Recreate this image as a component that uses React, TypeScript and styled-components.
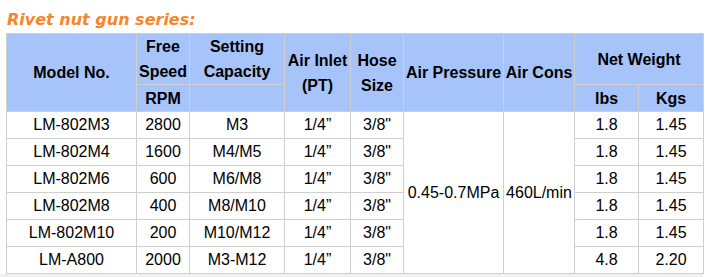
import styled, { createGlobalStyle } from 'styled-components';

const GlobalStyle = createGlobalStyle`
    body {
        margin: 0;
        background: #fff;
        font-family: "Liberation Sans", Arial, sans-serif;
    }
`;

const Page = styled.div`
    display: flex;
    flex-direction: column;
    padding: 8px 2px 0 6px;
`;

const Title = styled.h2`
    margin: 0 0 2px 1px;
    height: 23px;
    line-height: 23px;
    font-family: "DejaVu Sans", Verdana, sans-serif;
    font-size: 16px;
    font-weight: bold;
    font-style: italic;
    color: #f7852a;
`;

const Table = styled.table`
    border-collapse: collapse;
    table-layout: fixed;
    width: 698px;
    font-size: 16px;
    color: #000;
`;

const HeadCell = styled.th<{ $h?: number }>`
    background: #a7c4fa;
    border: 1px solid #cfcfcf;
    font-weight: bold;
    text-align: center;
    line-height: 25px;
    padding: 0;
    height: ${(p) => p.$h ?? 26}px;
`;

const Cell = styled.td`
    border: 1px solid #cfcfcf;
    text-align: center;
    height: 26px;
    padding: 0;
    line-height: 20px;
`;

const Footer = styled.div`
    height: 4px;
    margin-left: -6px;
    background: #f0f0f0;
`;

const cols = [130, 53, 95, 66, 53, 100, 71, 64, 65];

const rows = [
    ['LM-802M3', '2800', 'M3', '1.8', '1.45'],
    ['LM-802M4', '1600', 'M4/M5', '1.8', '1.45'],
    ['LM-802M6', '600', 'M6/M8', '1.8', '1.45'],
    ['LM-802M8', '400', 'M8/M10', '1.8', '1.45'],
    ['LM-802M10', '200', 'M10/M12', '1.8', '1.45'],
    ['LM-A800', '2000', 'M3-M12', '4.8', '2.20'],
];

function App() {
    return (
        <Page>
            <GlobalStyle />
            <Title>Rivet nut gun series:</Title>
            <Table>
                <colgroup>
                    {cols.map((w, i) => (
                        <col key={i} style={{ width: w }} />
                    ))}
                </colgroup>
                <thead>
                    <tr>
                        <HeadCell rowSpan={2}>Model No.</HeadCell>
                        <HeadCell $h={50}>Free<br />Speed</HeadCell>
                        <HeadCell $h={50}>Setting<br />Capacity</HeadCell>
                        <HeadCell rowSpan={2}>Air Inlet<br />(PT)</HeadCell>
                        <HeadCell rowSpan={2}>Hose<br />Size</HeadCell>
                        <HeadCell rowSpan={2}>Air Pressure</HeadCell>
                        <HeadCell rowSpan={2}>Air Cons</HeadCell>
                        <HeadCell colSpan={2} $h={50}>Net Weight</HeadCell>
                    </tr>
                    <tr>
                        <HeadCell>RPM</HeadCell>
                        <HeadCell></HeadCell>
                        <HeadCell>lbs</HeadCell>
                        <HeadCell>Kgs</HeadCell>
                    </tr>
                </thead>
                <tbody>
                    {rows.map((r, i) => (
                        <tr key={r[0]}>
                            <Cell>{r[0]}</Cell>
                            <Cell>{r[1]}</Cell>
                            <Cell>{r[2]}</Cell>
                            <Cell>1/4”</Cell>
                            <Cell>3/8"</Cell>
                            {i === 0 && (
                                <>
                                    <Cell rowSpan={6}>0.45-0.7MPa</Cell>
                                    <Cell rowSpan={6}>460L/min</Cell>
                                </>
                            )}
                            <Cell>{r[3]}</Cell>
                            <Cell>{r[4]}</Cell>
                        </tr>
                    ))}
                </tbody>
            </Table>
            <Footer />
        </Page>
    );
}

export default App;
